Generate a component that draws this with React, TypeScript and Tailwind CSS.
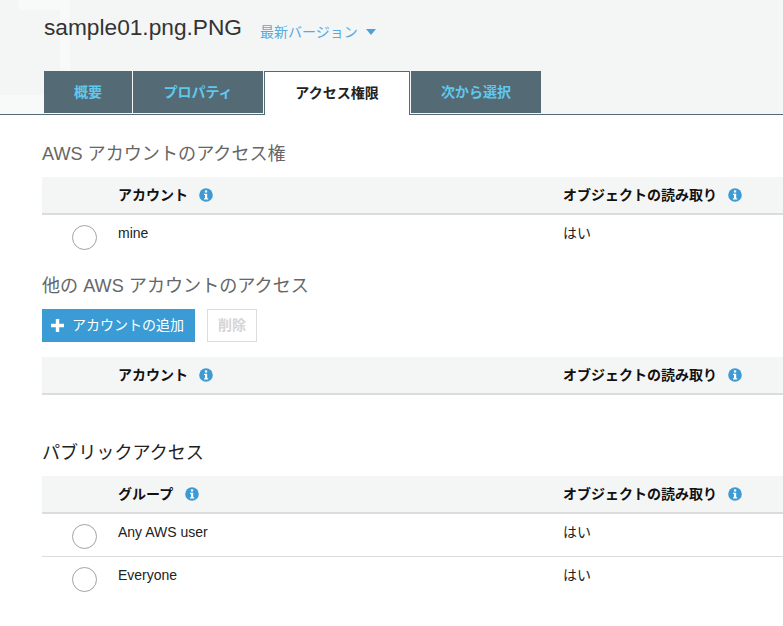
const InfoIcon = () => (
  <svg viewBox="0 0 14 14" className="w-[14px] h-[14px] shrink-0">
    <circle cx="7" cy="7" r="6.8" fill="#3e9ad3" />
    <rect x="5.9" y="2.4" width="2.3" height="2.1" fill="#fff" />
    <path d="M5 5.7h3.2v4.6h1v1.3H5v-1.3h1V7H5z" fill="#fff" />
  </svg>
);

const Radio = () => <span className="block w-[25px] h-[25px] rounded-full border border-[#a3a3a3] bg-white" />;

const HeadRow = ({ label, wide }: { label: string; wide?: boolean }) => (
  <div className="flex h-[38px] items-center bg-[#f4f6f6] border-b-2 border-[#dcdcdc] ml-[42px] text-[14px] font-bold text-[#111]">
    <div className={`flex items-center w-[521px] pl-[76px] ${wide ? 'gap-[12px]' : 'gap-[11px]'}`}>
      <span>{label}</span>
      <InfoIcon />
    </div>
    <div className="flex items-center gap-[11px]">
      <span>オブジェクトの読み取り</span>
      <InfoIcon />
    </div>
  </div>
);

const Row = ({ name, last }: { name: string; last?: boolean }) => (
  <div className={`flex h-[43px] ml-[42px] text-[14px] text-[#222] ${last ? '' : 'border-b border-[#dcdcdc]'}`}>
    <div className="w-[76px] pl-[30px] pt-[10px]">
      <Radio />
    </div>
    <div className="w-[445px] pt-[8px]">{name}</div>
    <div className="pt-[8px]">はい</div>
  </div>
);

export default function App() {
  return (
    <div className="relative w-[783px] h-[626px] overflow-hidden bg-white font-['Liberation_Sans','Noto_Sans_CJK_JP',sans-serif]">
      <div className="relative h-[115px] bg-[#f4f6f6] border-b border-[#546b75]">
        <svg className="absolute left-0 top-0" width="70" height="114" viewBox="0 0 70 114">
          <path d="M18 0H70V114H0V95H60V10H24Q18 10 18 4Z" fill="#f8f9f9" />
        </svg>
        <div className="relative flex pl-[44px] pt-[13px] h-[71px] items-start">
          <h1 className="text-[22.7px] leading-[28px] text-[#333]">sample01.png.PNG</h1>
          <span className="ml-[18px] mt-[9px] text-[14px] leading-[20px] text-[#5aa9de] flex items-center">
            最新バージョン
            <svg width="10" height="6" viewBox="0 0 10 6" className="ml-[8px]">
              <path d="M0 0h10L5 6z" fill="#4f9fd8" />
            </svg>
          </span>
        </div>
        <div className="relative flex pl-[44px] gap-[1px] text-[14px] font-bold h-[44px]">
          <div className="w-[88px] h-[42px] bg-[#546b75] text-[#5fc8ee] flex items-center justify-center">概要</div>
          <div className="w-[130px] h-[42px] bg-[#546b75] text-[#5fc8ee] flex items-center justify-center">プロパティ</div>
          <div className="w-[146px] h-[44px] bg-white border border-b-0 border-[#546b75] text-[#222] flex items-center justify-center">アクセス権限</div>
          <div className="w-[130px] h-[42px] bg-[#546b75] text-[#5fc8ee] flex items-center justify-center">次から選択</div>
        </div>
      </div>

      <h2 className="ml-[42px] mt-[28px] mb-[11px] h-[23px] text-[18.1px] leading-[23px] text-[#666]">AWS アカウントのアクセス権</h2>
      <HeadRow label="アカウント" />
      <div className="h-[37px]">
        <Row name="mine" last />
      </div>

      <h2 className="ml-[42px] mt-[23px] mb-[11px] h-[23px] text-[18.1px] leading-[23px] text-[#666]">他の AWS アカウントのアクセス</h2>
      <div className="flex ml-[42px] gap-[12px] text-[14px]">
        <button className="flex items-center h-[33px] w-[153px] bg-[#3a9bd5] text-white pl-[9px] pb-[1px]">
          <svg width="13" height="13" viewBox="0 0 13 13" className="mr-[8px]">
            <path d="M4.8 0h3.4v4.8H13v3.4H8.200V13H4.800V8.200H0V4.800h4.800z" fill="#fff" />
          </svg>
          アカウントの追加
        </button>
        <button className="h-[33px] w-[50px] border border-[#dcdcdc] bg-white text-[#d5d5d5] font-bold">削除</button>
      </div>
      <div className="mt-[15px]">
        <HeadRow label="アカウント" />
      </div>

      <h2 className="ml-[42px] mt-[47px] mb-[11px] h-[23px] text-[18.1px] leading-[23px] text-[#222]">パブリックアクセス</h2>
      <HeadRow label="グループ" wide />
      <Row name="Any AWS user" />
      <Row name="Everyone" last />
    </div>
  );
}
